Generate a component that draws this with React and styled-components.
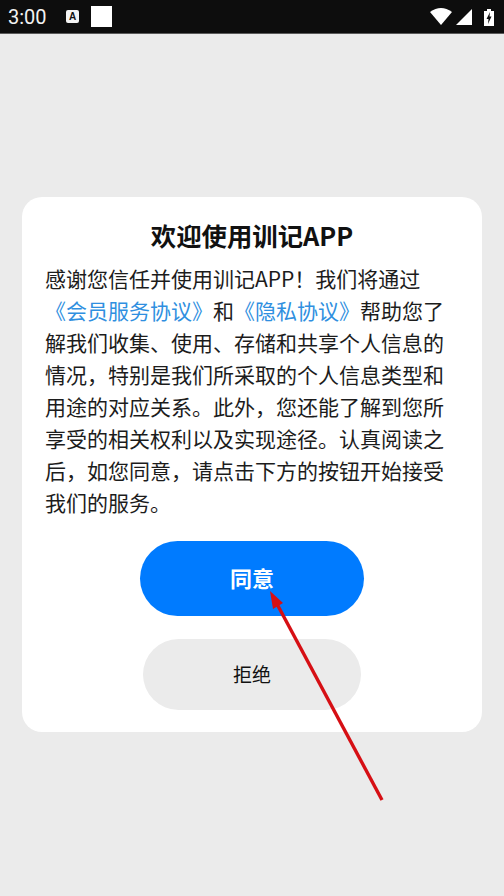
import React from "react";
import styled, { createGlobalStyle } from "styled-components";

const GlobalStyle = createGlobalStyle`
  html, body {
    margin: 0;
    padding: 0;
    background: #ebebeb;
  }
  * {
    box-sizing: border-box;
  }
`;

const Screen = styled.div`
  position: relative;
  width: 504px;
  height: 896px;
  overflow: hidden;
  background: #ebebeb;
  font-family: "Noto Sans CJK SC", "Liberation Sans", sans-serif;
`;

const StatusBar = styled.div`
  height: 34px;
  background: #0d0d0d;
  border-bottom: 1px solid #5a5a5a;
  display: flex;
  align-items: center;
  padding: 0 9px 0 8px;
`;

const Clock = styled.span`
  font-family: Roboto, "Liberation Sans", sans-serif;
  font-size: 20px;
  color: #f2f2f2;
  width: 46px;
`;

const StatusLeft = styled.div`
  display: flex;
  align-items: center;
  gap: 12px;
`;

const KeyboardBadge = styled.span`
  width: 13px;
  height: 13px;
  border-radius: 2px;
  background: #f4f4f4;
  color: #111;
  font-family: "Liberation Sans", sans-serif;
  font-size: 10px;
  font-weight: 700;
  line-height: 13px;
  text-align: center;
`;

const WhiteSquare = styled.span`
  width: 21px;
  height: 21px;
  background: #fff;
`;

const StatusRight = styled.div`
  margin-left: auto;
  display: flex;
  align-items: center;
  gap: 4px;
`;

const Body = styled.main`
  padding: 163px 22px 0;
`;

const Card = styled.section`
  height: 535px;
  background: #fff;
  border-radius: 20px;
  padding: 22px 23px 0;
  display: flex;
  flex-direction: column;
  align-items: center;
`;

const Title = styled.h1`
  margin: 0;
  font-size: 25.4px;
  line-height: 32px;
  font-weight: 700;
  color: #111;
  text-align: center;
`;

const Paragraph = styled.p`
  margin: 11px 0 0;
  width: 100%;
  font-size: 21px;
  line-height: 32px;
  color: #1c1c1c;
  letter-spacing: 0;
`;

const Line = styled.span`
  display: block;
  white-space: nowrap;
`;

const PolicyLink = styled.a`
  color: #2f8fe0;
  text-decoration: none;
`;

const Button = styled.button`
  display: flex;
  align-items: center;
  justify-content: center;
  border: 0;
  padding: 0 0 ${(p) => (p.$primary ? "4px" : "2px")};
  font-family: inherit;
  width: ${(p) => (p.$primary ? "224px" : "218px")};
  height: ${(p) => (p.$primary ? "75px" : "71px")};
  margin-top: 23px;
  border-radius: 38px;
  background: ${(p) => (p.$primary ? "#007bff" : "#ebebeb")};
  color: ${(p) => (p.$primary ? "#fff" : "#111")};
  font-size: ${(p) => (p.$primary ? "22px" : "19px")};
  font-weight: ${(p) => (p.$primary ? 700 : 400)};
`;

const ArrowOverlay = styled.svg`
  position: absolute;
  left: 0;
  top: 0;
  pointer-events: none;
`;

export default function App() {
  return (
    <Screen>
      <GlobalStyle />
      <StatusBar>
        <StatusLeft>
          <Clock>3:00</Clock>
          <KeyboardBadge>A</KeyboardBadge>
          <WhiteSquare />
        </StatusLeft>
        <StatusRight>
          <svg width="22" height="17" viewBox="0 0 22 17">
            <path d="M0 4 Q11 -4 22 4 L11 17 Z" fill="#fff" />
          </svg>
          <svg width="16" height="16" viewBox="0 0 16 16">
            <path d="M0 16 L16 0 V16 Z" fill="#fff" />
          </svg>
          <svg width="12" height="18" viewBox="0 0 12 18" style={{ marginLeft: 7 }}>
            <path d="M1 3 H4 V1 H8 V3 H11 V18 H1 Z" fill="#fff" />
            <path d="M7 4 L3.5 11 H5.5 L5 16 L8.5 8.5 H6.5 Z" fill="#0d0d0d" />
          </svg>
        </StatusRight>
      </StatusBar>
      <Body>
        <Card>
          <Title>欢迎使用训记APP</Title>
          <Paragraph>
            <Line>感谢您信任并使用训记APP！我们将通过</Line>
            <Line>
              <PolicyLink>《会员服务协议》</PolicyLink>和
              <PolicyLink>《隐私协议》</PolicyLink>帮助您了
            </Line>
            <Line>解我们收集、使用、存储和共享个人信息的</Line>
            <Line>情况，特别是我们所采取的个人信息类型和</Line>
            <Line>用途的对应关系。此外，您还能了解到您所</Line>
            <Line>享受的相关权利以及实现途径。认真阅读之</Line>
            <Line>后，如您同意，请点击下方的按钮开始接受</Line>
            <Line>我们的服务。</Line>
          </Paragraph>
          <Button $primary>同意</Button>
          <Button>拒绝</Button>
        </Card>
      </Body>
      <ArrowOverlay width="504" height="896" viewBox="0 0 504 896">
        <line x1="382" y1="800" x2="277" y2="604" stroke="#d60f14" strokeWidth="3.4" />
        <path d="M270 591 L283 603 L273 609 Z" fill="#d60f14" />
      </ArrowOverlay>
    </Screen>
  );
}
